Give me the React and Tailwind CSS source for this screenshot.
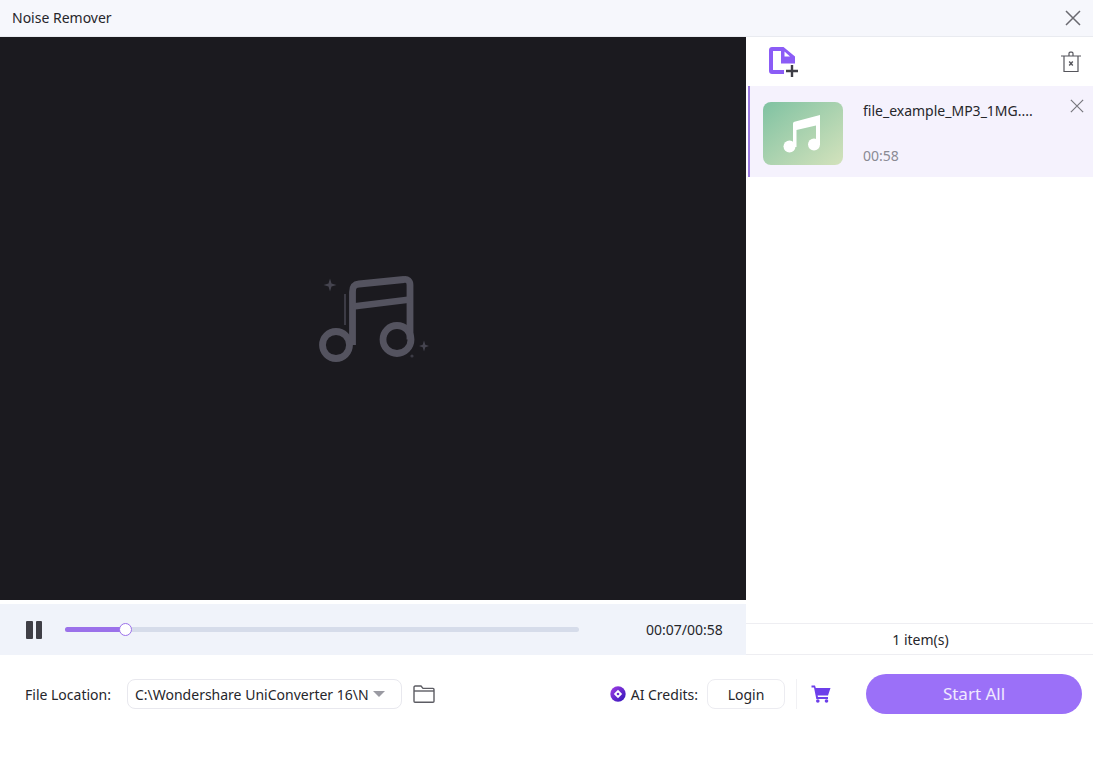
import React from "react";

const X = ({ s = 16, c = "#6b6b72", w = 1.5 }) => (
  <svg width={s} height={s} viewBox="0 0 16 16" fill="none" stroke={c} strokeWidth={w}>
    <path d="M1 1L15 15M15 1L1 15" />
  </svg>
);

const BigNote = () => (
  <svg width="112" height="92" viewBox="0 0 112 92" fill="none">
    <g stroke="#54535f" strokeWidth="6.8">
      <circle cx="19" cy="72" r="13.5" />
      <circle cx="80" cy="66.5" r="14" />
      <path d="M35.5 72V19C35.5 13.5 37.5 11.5 42 11L87 6.5C90.5 6 93 8 93 12V66.5" strokeLinejoin="round" />
      <path d="M36 33.5L93 26.5" />
    </g>
    <path d="M28 21V52" stroke="#3c3b45" strokeWidth="2" />
    <path d="M13 5.5L14.5 10.5L19.5 12L14.5 13.5L13 18.5L11.5 13.5L6.5 12L11.5 10.5Z" fill="#45444f" />
    <path d="M107 67.5L108.3 71.7L112 73L108.3 74.3L107 78.5L105.7 74.3L102 73L105.7 71.7Z" fill="#45444f" />
    <circle cx="95" cy="83" r="1.6" fill="#3c3b45" />
  </svg>
);

const SmallNote = () => (
  <svg width="40" height="42" viewBox="0 0 40 42" fill="#fff">
    <path d="M10 11C10 9.5 10.5 9 11.5 8.7L37 2V32H33V12.5L13.5 17V34H10Z" />
    <circle cx="6.5" cy="33.5" r="6" />
    <circle cx="31" cy="31.5" r="6" />
  </svg>
);

const AddFile = () => (
  <svg width="32" height="32" viewBox="0 0 32 32" fill="none">
    <path
      d="M1 4C1 2.3 2.3 1 4 1H15.5L27 10.5V17.5H13V5H5V24H16V28H4C2.3 28 1 26.7 1 25Z"
      fill="#8b5cf6"
    />
    <path d="M16.5 5.5L22 10.5H16.5Z" fill="#fff" />
    <path d="M24 19V31M18 25H30" stroke="#3e3e46" strokeWidth="2.4" />
  </svg>
);

const Trash = () => (
  <svg width="20" height="22" viewBox="0 0 20 22" fill="none" stroke="#55555c" strokeWidth="1.2">
    <path d="M0 5H20M3 5V20.5H17V5M8 5V2.5C8 1.7 8.5 1.2 9.2 1.2H10.8C11.5 1.2 12 1.7 12 2.5V5" />
    <path d="M8.2 10.5L11.8 14.5M11.8 10.5L8.2 14.5" strokeWidth="1.4" />
  </svg>
);

const Folder = () => (
  <svg width="22" height="18" viewBox="0 0 22 18" fill="none" stroke="#5c5c63" strokeWidth="1.4">
    <path d="M1 16.3V2.2C1 1.6 1.5 1 2.2 1H8L10 3.4H20C20.6 3.4 21 3.8 21 4.4V16.3C21 16.8 20.6 17.2 20 17.2H2C1.4 17.2 1 16.8 1 16.3Z" />
    <path d="M1 6H21" />
  </svg>
);

const Cart = () => (
  <svg width="20" height="18" viewBox="0 0 20 18" fill="#6d3fea">
    <path d="M0.5 0.5H4L4.8 3H19.5L17 10.5H6.6L7 12H17V14H5.3L3 2.5H0.5Z" />
    <circle cx="6.8" cy="16" r="1.8" />
    <circle cx="15.5" cy="16" r="1.8" />
  </svg>
);

const Credit = () => (
  <svg width="16" height="16" viewBox="0 0 16 16">
    <defs>
      <linearGradient id="cg" x1="0" y1="0" x2="1" y2="1">
        <stop offset="0" stopColor="#a53fe6" />
        <stop offset="1" stopColor="#2d14b8" />
      </linearGradient>
    </defs>
    <circle cx="8" cy="8" r="7.7" fill="url(#cg)" />
    <path d="M8 3.8L12.2 8L8 12.2L3.8 8Z" fill="#fff" />
    <circle cx="8" cy="8" r="1.3" fill="#6a2bd0" />
  </svg>
);

export default function App() {
  return (
    <div className="w-[1093px] h-[777px] bg-white flex flex-col overflow-hidden text-[14px] text-[#26262b] font-['Noto_Sans','Open_Sans',sans-serif]">
      <header className="h-[37px] shrink-0 bg-[#f6f7fc] border-b border-[#e9ebf0] flex items-center justify-between pl-3 pr-[12px]">
        <span className="text-[14px] mb-[2px]">Noise Remover</span>
        <X s={16} c="#6a6a70" />
      </header>

      <div className="flex h-[618px] shrink-0">
        <div className="w-[746px] flex flex-col shrink-0">
          <div className="h-[563px] bg-[#1b1a1f] flex items-center justify-center">
            <BigNote />
          </div>
          <div className="h-[4px] bg-white" />
          <div className="h-[51px] bg-[#f0f3fa] flex items-center pl-[26px]">
            <div className="flex gap-[3px]">
              <div className="w-[6.5px] h-[18px] bg-[#3f3f46] rounded-[1px]" />
              <div className="w-[6.5px] h-[18px] bg-[#3f3f46] rounded-[1px]" />
            </div>
            <div className="relative ml-[23px] w-[514px] h-[5px] rounded-full bg-[#d6dcea]">
              <div className="h-full w-[60px] rounded-full bg-[#9b71ea]" />
              <div className="absolute left-[54px] top-[-4px] w-[13px] h-[13px] rounded-full bg-white border border-[#9b71ea]" />
            </div>
            <span className="ml-[67px] text-[14px] whitespace-nowrap">00:07/00:58</span>
          </div>
        </div>

        <aside className="flex-1 flex flex-col">
          <div className="h-[49px] shrink-0 flex items-center justify-between pl-[22px] pr-[12px]">
            <AddFile />
            <Trash />
          </div>
          <div className="h-[91px] shrink-0 bg-[#f5f2fd] border-l-2 border-[#9b7ce0] ml-[2px] flex pl-[13px] pt-[16px] relative">
            <div className="w-[80px] h-[63px] rounded-[8px] bg-gradient-to-br from-[#7fc2a2] to-[#d3e2bc] flex items-center justify-center">
              <SmallNote />
            </div>
            <div className="ml-[20px] flex flex-col">
              <span className="text-[14px] leading-[20px] mt-[-1px]">file_example_MP3_1MG....</span>
              <span className="text-[14px] leading-[20px] mt-[25px] text-[#8a8a94]">00:58</span>
            </div>
            <div className="absolute right-[9px] top-[13px]"><X s={14} c="#77777e" w={1.4} /></div>
          </div>
          <div className="flex-1" />
          <div className="h-[32px] shrink-0 border-t border-b border-[#eeeef2] flex items-center justify-center text-[14px] pl-[2px]">
            1 item(s)
          </div>
        </aside>
      </div>

      <footer className="flex items-start pl-[25px] pr-[11px] pt-[18px]">
        <div className="flex items-center h-[41px]">
          <span className="whitespace-nowrap pt-[1px]">File Location:</span>
          <div className="ml-[16px] w-[275px] h-[30px] rounded-[8px] border border-[#e8e8ee] flex items-center pl-[7px] pr-[15px]">
            <span className="w-[232px] whitespace-nowrap pt-[1px]">C:\Wondershare UniConverter 16\N</span>
            <span className="ml-[6px] w-0 h-0 border-l-[6px] border-r-[6px] border-t-[6px] border-l-transparent border-r-transparent border-t-[#9a9aa2]" />
          </div>
          <div className="ml-[11px] flex"><Folder /></div>
        </div>
        <div className="flex items-center h-[41px] ml-auto">
          <Credit />
          <span className="ml-[5px] whitespace-nowrap pt-[1px]">AI Credits:</span>
          <div className="ml-[9px] w-[78px] h-[30px] rounded-[8px] border border-[#ececf1] flex items-center justify-center pt-[1px]">Login</div>
          <div className="ml-[11px] w-px h-[30px] bg-[#f1f1f4]" />
          <div className="ml-[14px] flex"><Cart /></div>
          <div className="ml-[35px] w-[216px] h-[40px] rounded-full bg-[#9b70f8] text-white/85 text-[17px] flex items-center justify-center">Start All</div>
        </div>
      </footer>
    </div>
  );
}
